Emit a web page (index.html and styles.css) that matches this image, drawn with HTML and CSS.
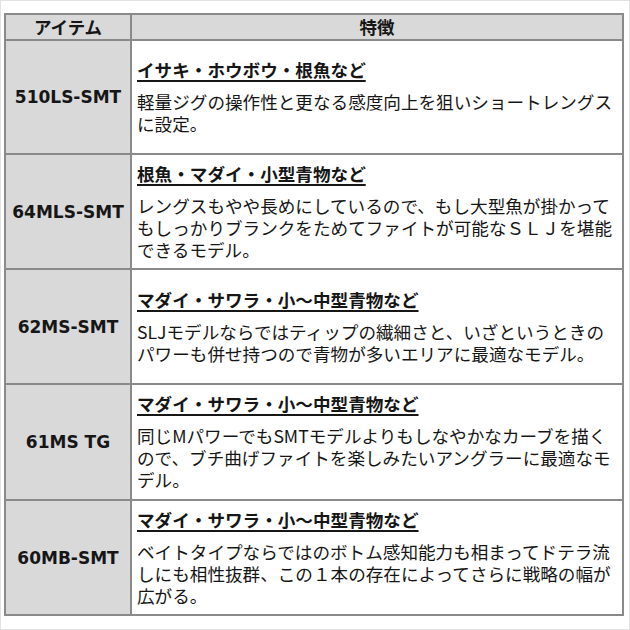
FILE: index.html
```html
<!DOCTYPE html>
<html lang="ja">
<head>
<meta charset="utf-8">
<link rel="stylesheet" href="styles.css">
</head>
<body>
<div class="frame">
  <div class="spec">
    <div class="cell head item">アイテム</div>
    <div class="cell head feat">特徴</div>

    <div class="cell name">510LS-SMT</div>
    <div class="cell desc">
      <div class="title">イサキ・ホウボウ・根魚など</div>
      <div class="body">軽量ジグの操作性と更なる感度向上を狙いショートレングス<br>に設定。</div>
    </div>

    <div class="cell name">64MLS-SMT</div>
    <div class="cell desc">
      <div class="title">根魚・マダイ・小型青物など</div>
      <div class="body">レングスもやや長めにしているので、もし大型魚が掛かって<br>もしっかりブランクをためてファイトが可能なＳＬＪを堪能<br>できるモデル。</div>
    </div>

    <div class="cell name">62MS-SMT</div>
    <div class="cell desc">
      <div class="title">マダイ・サワラ・小～中型青物など</div>
      <div class="body">SLJモデルならではティップの繊細さと、いざというときの<br>パワーも併せ持つので青物が多いエリアに最適なモデル。</div>
    </div>

    <div class="cell name">61MS TG</div>
    <div class="cell desc">
      <div class="title">マダイ・サワラ・小～中型青物など</div>
      <div class="body">同じMパワーでもSMTモデルよりもしなやかなカーブを描く<br>ので、ブチ曲げファイトを楽しみたいアングラーに最適なモ<br>デル。</div>
    </div>

    <div class="cell name">60MB-SMT</div>
    <div class="cell desc">
      <div class="title">マダイ・サワラ・小～中型青物など</div>
      <div class="body">ベイトタイプならではのボトム感知能力も相まってドテラ流<br>しにも相性抜群、この１本の存在によってさらに戦略の幅が<br>広がる。</div>
    </div>
  </div>
</div>
</body>
</html>
```

FILE: styles.css
```css
* { box-sizing: border-box; }
html, body {
  margin: 0;
  padding: 0;
  background: #ffffff;
}
.frame {
  width: 630px;
  height: 630px;
  border: 1px solid #e2e2e2;
  padding: 12px 0 0 3px;
  font-family: "Noto Sans CJK JP", sans-serif;
  color: #161616;
}
.spec {
  display: grid;
  grid-template-columns: 126px 492px;
  grid-template-rows: 26px 114px 115px 115px 116px 115px;
  border-top: 2px solid #8a8a8a;
  border-left: 2px solid #8a8a8a;
  width: 620px;
}
.cell {
  border-right: 2px solid #8a8a8a;
  border-bottom: 2px solid #8a8a8a;
}
.head {
  background: #d9d9d9;
  font-weight: bold;
  font-size: 17.5px;
  line-height: 24px;
  text-align: center;
}
.name {
  background: #d9d9d9;
  font-family: "DejaVu Sans", sans-serif;
  font-weight: bold;
  font-size: 17px;
  display: flex;
  align-items: center;
  justify-content: center;
}
.desc {
  display: flex;
  flex-direction: column;
  justify-content: center;
  padding: 0 0 0 5px;
  font-size: 17.6px;
  white-space: nowrap;
}
.title {
  font-weight: bold;
  line-height: 22px;
  text-decoration: underline;
  text-decoration-thickness: 1.5px;
  text-underline-offset: 3px;
  margin-bottom: 10px;
}
.body {
  line-height: 22px;
}
```
